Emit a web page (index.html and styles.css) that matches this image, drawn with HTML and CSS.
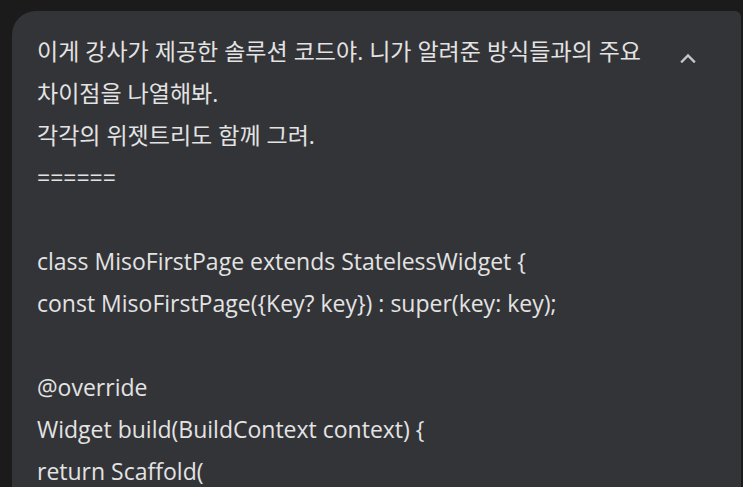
FILE: index.html
```html
<!DOCTYPE html>
<html lang="ko">
<head>
<meta charset="utf-8">
<link rel="stylesheet" href="styles.css">
</head>
<body>
<div class="page">
  <div class="query-card">
    <div class="query-text">이게 강사가 제공한 솔루션 코드야. 니가 알려준 방식들과의 주요 차이점을 나열해봐.
각각의 위젯트리도 함께 그려.
======

class MisoFirstPage extends StatelessWidget {
const MisoFirstPage({Key? key}) : super(key: key);

@override
Widget build(BuildContext context) {
return Scaffold(
body: Center(
child: Column(</div>
    <button class="collapse-btn" aria-label="접기">
      <svg width="16" height="10" viewBox="0 0 16 10"><path d="M2 8.5 L8 2.5 L14 8.5" fill="none" stroke="#c4c7c5" stroke-width="2.4" stroke-linecap="square"/></svg>
    </button>
  </div>
</div>
</body>
</html>
```
FILE: styles.css
```css
html, body {
  margin: 0;
  padding: 0;
  background: #1b1b1c;
  height: 100%;
  overflow: hidden;
}
.page {
  padding: 11px 2px 0 12px;
}
.query-card {
  display: flex;
  align-items: flex-start;
  background: #333438;
  border-radius: 24px 6px 0 0;
  padding: 19px 33px 40px 25px;
  min-height: 600px;
}
.query-text {
  flex: 1;
  max-width: 615px;
  white-space: pre-line;
  font-family: "Open Sans", "Noto Sans CJK KR", sans-serif;
  font-size: 23px;
  line-height: 42px;
  color: #e3e3e3;
}
.collapse-btn {
  margin-left: auto;
  margin-top: 8px;
  width: 40px;
  height: 40px;
  border: none;
  border-radius: 50%;
  background: transparent;
  display: flex;
  align-items: center;
  justify-content: center;
  padding: 0;
}
```
